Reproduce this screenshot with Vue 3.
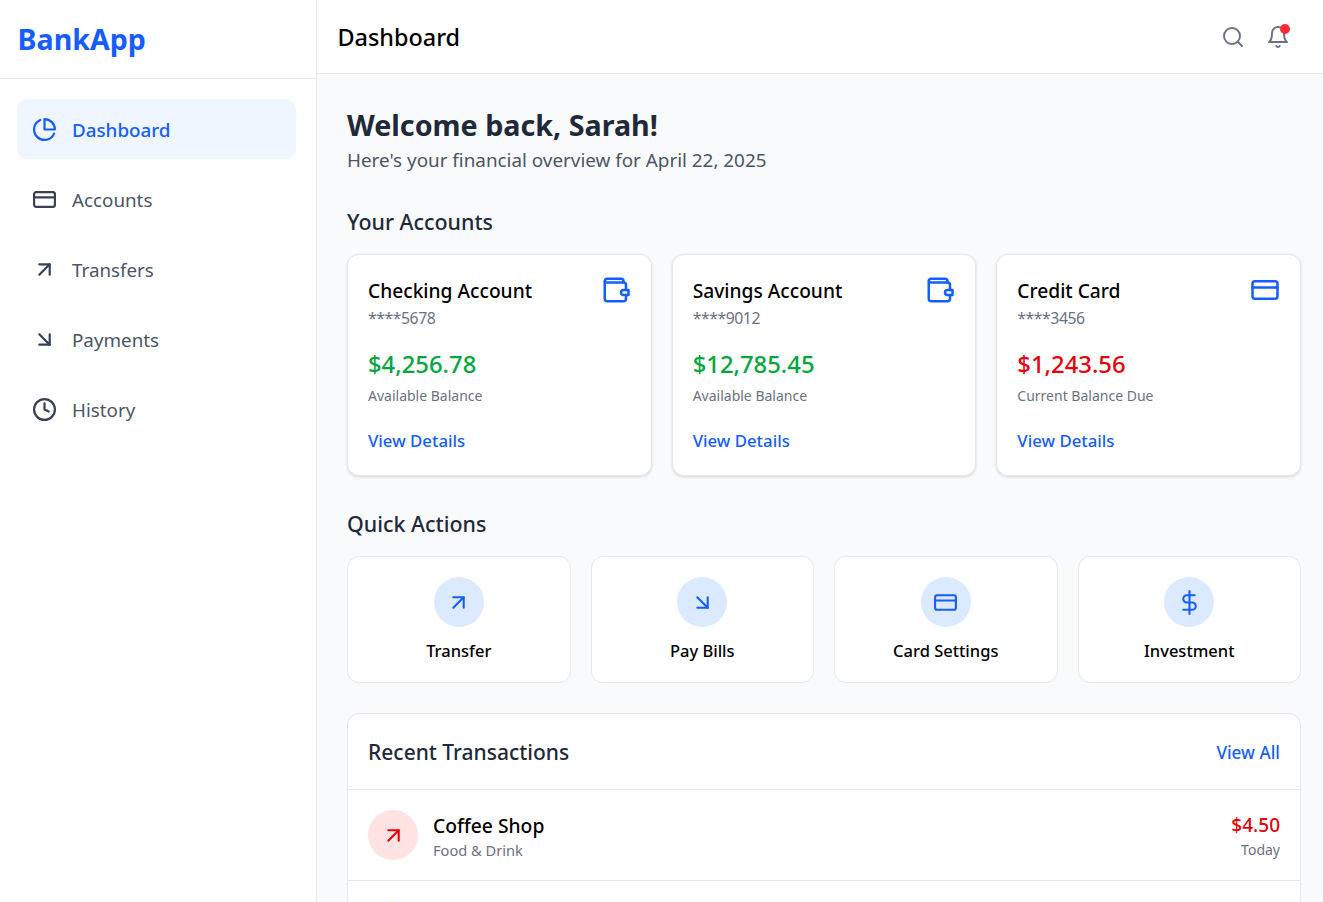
<script setup>
const nav = [
  { label: 'Dashboard', icon: 'pie', active: true },
  { label: 'Accounts', icon: 'card' },
  { label: 'Transfers', icon: 'up' },
  { label: 'Payments', icon: 'down' },
  { label: 'History', icon: 'clock' },
]
const accounts = [
  { name: 'Checking Account', num: '****5678', bal: '$4,256.78', note: 'Available Balance', icon: 'wallet', neg: false },
  { name: 'Savings Account', num: '****9012', bal: '$12,785.45', note: 'Available Balance', icon: 'wallet', neg: false },
  { name: 'Credit Card', num: '****3456', bal: '$1,243.56', note: 'Current Balance Due', icon: 'card', neg: true },
]
const actions = [
  { label: 'Transfer', icon: 'up' },
  { label: 'Pay Bills', icon: 'down' },
  { label: 'Card Settings', icon: 'card' },
  { label: 'Investment', icon: 'dollar' },
]
const paths = {
  pie: ['M21.21 15.89A10 10 0 1 1 8 2.83', 'M22 12A10 10 0 0 0 12 2v10z'],
  card: ['M4 5h16a2 2 0 0 1 2 2v10a2 2 0 0 1-2 2H4a2 2 0 0 1-2-2V7a2 2 0 0 1 2-2z', 'M2 10h20'],
  up: ['M7 17L17 7', 'M7 7h10v10'],
  down: ['M7 7l10 10', 'M17 7v10H7'],
  clock: ['M12 2a10 10 0 1 0 0 20a10 10 0 0 0 0-20z', 'M12 6v6l4 2'],
  wallet: ['M18 6V5a2 2 0 0 0-2-2H5a2 2 0 0 0-2 2v14a2 2 0 0 0 2 2h13a2 2 0 0 0 2-2v-3', 'M3 5a2 2 0 0 0 2 1h13a2 2 0 0 1 2 2v4', 'M22 12h-4a2 2 0 0 0 0 4h4z'],
  dollar: ['M12 1v22', 'M17 5H9.5a3.5 3.5 0 0 0 0 7h5a3.5 3.5 0 0 1 0 7H6'],
  search: ['M11 3a8 8 0 1 0 0 16a8 8 0 0 0 0-16z', 'M21 21l-4.35-4.35'],
  bell: ['M18 8A6 6 0 0 0 6 8c0 7-3 9-3 9h18s-3-2-3-9', 'M13.73 21a2 2 0 0 1-3.46 0'],
}
</script>

<template>
  <div class="app">
    <aside class="sidebar">
      <div class="brand">BankApp</div>
      <nav class="nav">
        <a v-for="n in nav" :key="n.label" class="nav-item" :class="{ active: n.active }">
          <svg class="nav-icon" viewBox="0 0 24 24"><path v-for="d in paths[n.icon]" :key="d" :d="d" /></svg>
          <span class="nav-label">{{ n.label }}</span>
        </a>
      </nav>
    </aside>
    <div class="main">
      <header class="topbar">
        <h1>Dashboard</h1>
        <div class="top-icons">
          <svg class="top-icon" viewBox="0 0 24 24"><path v-for="d in paths.search" :key="d" :d="d" /></svg>
          <span class="bell">
            <svg class="top-icon" viewBox="0 0 24 24"><path v-for="d in paths.bell" :key="d" :d="d" /></svg>
            <i class="dot"></i>
          </span>
        </div>
      </header>
      <main class="content">
        <h2 class="welcome">Welcome back, Sarah!</h2>
        <p class="sub">Here's your financial overview for April 22, 2025</p>
        <h3 class="section">Your Accounts</h3>
        <div class="accounts">
          <div v-for="a in accounts" :key="a.name" class="account">
            <div class="acc-head">
              <div>
                <div class="acc-name">{{ a.name }}</div>
                <div class="acc-num">{{ a.num }}</div>
              </div>
              <svg class="acc-icon" viewBox="0 0 24 24"><path v-for="d in paths[a.icon]" :key="d" :d="d" /></svg>
            </div>
            <div class="acc-bal" :class="a.neg ? 'neg' : 'pos'">{{ a.bal }}</div>
            <div class="acc-note">{{ a.note }}</div>
            <a class="link acc-link">View Details</a>
          </div>
        </div>
        <h3 class="section">Quick Actions</h3>
        <div class="actions">
          <div v-for="q in actions" :key="q.label" class="action">
            <span class="circle">
              <svg class="circle-icon" viewBox="0 0 24 24"><path v-for="d in paths[q.icon]" :key="d" :d="d" /></svg>
            </span>
            <span class="action-label">{{ q.label }}</span>
          </div>
        </div>
        <section class="tx">
          <div class="tx-head">
            <h3>Recent Transactions</h3>
            <a class="link all">View All</a>
          </div>
          <div class="tx-row">
            <span class="circle red">
              <svg class="circle-icon" viewBox="0 0 24 24"><path v-for="d in paths.up" :key="d" :d="d" /></svg>
            </span>
            <div class="tx-info">
              <div class="tx-name">Coffee Shop</div>
              <div class="tx-cat">Food &amp; Drink</div>
            </div>
            <div class="tx-right">
              <div class="tx-amt">$4.50</div>
              <div class="tx-cat today">Today</div>
            </div>
          </div>
          <div class="tx-row">
            <span class="circle green"></span>
          </div>
        </section>
      </main>
    </div>
  </div>
</template>

<style>
html, body { margin: 0; height: 100%; overflow: hidden; }
</style>

<style scoped>
.app {
  display: flex;
  height: 902px;
  overflow: hidden;
  font-family: "Noto Sans", sans-serif;
  background: #f9fafb;
  color: #101828;
}
svg { fill: none; stroke: currentColor; stroke-width: 2; stroke-linecap: round; stroke-linejoin: round; flex: none; }
.sidebar { width: 317px; box-sizing: border-box; flex: none; background: #fff; border-right: 1px solid #e5e7eb; }
.brand { height: 79px; box-sizing: border-box; border-bottom: 1px solid #e5e7eb; padding: 0 18px 2px 17.5px; display: flex; align-items: center; font-size: 28.6px; font-weight: 700; color: #155dfc; }
.nav { padding: 20px 17px; display: flex; flex-direction: column; gap: 10px; width: 279px; }
.nav-item { height: 60px; border-radius: 10px; display: flex; align-items: center; gap: 15px; padding: 0 15px; font-size: 18.8px; color: #4a5565; }
.nav-label { margin-top: 2px; }
.nav-item.active { background: #eff6ff; color: #155dfc; font-weight: 500; }
.nav-icon { width: 25px; height: 25px; stroke-width: 2.1; color: #364153; }
.active .nav-icon { color: #155dfc; }
.main { flex: 1; min-width: 0; display: flex; flex-direction: column; }
.topbar { height: 74px; box-sizing: border-box; flex: none; background: #fff; border-bottom: 1px solid #e5e7eb; display: flex; align-items: center; justify-content: space-between; padding: 0 33px 0 20.5px; }
.topbar h1 { margin: 0; font-size: 23.4px; font-weight: 500; color: #000; }
.top-icons { display: flex; gap: 21px; color: #6a7282; }
.top-icon { width: 24px; height: 24px; display: block; }
.bell { position: relative; display: block; }
.dot { position: absolute; top: -1px; right: 0; width: 10px; height: 10px; border-radius: 50%; background: #fb2c36; }
.content { padding: 31px 22px 0 30px; }
.welcome { margin: 0 0 1px; font-size: 28.7px; line-height: 40px; font-weight: 700; color: #1e2939; }
.sub { margin: 0; font-size: 18.85px; line-height: 28px; color: #4a5565; }
.section { margin: 33px 0 17px; font-size: 21.4px; line-height: 30px; font-weight: 500; color: #1e2939; }
.accounts { display: grid; grid-template-columns: repeat(3, 1fr); gap: 20px; }
.account { background: #fff; border: 1px solid #e5e7eb; border-radius: 12px; padding: 20px; box-shadow: 0 1px 3px rgba(0,0,0,.14); height: 222px; box-sizing: border-box; }
.acc-head { display: flex; justify-content: space-between; align-items: flex-start; }
.acc-name { font-size: 19.2px; line-height: 30px; font-weight: 500; color: #000; margin-top: 1px; }
.acc-num { font-size: 15.8px; line-height: 25px; letter-spacing: -0.45px; color: #6a7282; }
.acc-icon { width: 30px; height: 30px; color: #155dfc; }
.acc-bal { font-size: 23.8px; line-height: 34px; font-weight: 500; margin-top: 16px; }
.pos { color: #00a63e; }
.neg { color: #e7000b; }
.acc-note { font-size: 14px; line-height: 22px; color: #6a7282; margin-top: 4px; }
.link { color: #155dfc; font-size: 16.8px; font-weight: 500; }
.all { font-size: 17.2px; margin-top: 2px; }
.acc-link { display: block; margin-top: 21px; line-height: 26px; }
.actions { display: grid; grid-template-columns: repeat(4, 1fr); gap: 20px; }
.action { background: #fff; border: 1px solid #e5e7eb; border-radius: 12px; padding: 20px 0; display: flex; flex-direction: column; align-items: center; height: 127px; box-sizing: border-box; }
.circle { width: 50px; height: 50px; border-radius: 50%; background: #dbeafe; color: #155dfc; display: flex; align-items: center; justify-content: center; flex: none; }
.circle-icon { width: 25px; height: 25px; }
.action-label { margin-top: 11px; font-size: 16.5px; line-height: 26px; font-weight: 500; color: #000; }
.tx { margin-top: 30px; background: #fff; border: 1px solid #e5e7eb; border-radius: 12px; }
.tx-head { height: 76px; box-sizing: border-box; display: flex; align-items: center; justify-content: space-between; padding: 0 20px; border-bottom: 1px solid #e5e7eb; }
.tx-head h3 { margin: 0; font-size: 21px; font-weight: 500; color: #1e2939; }
.tx-row { height: 91px; box-sizing: border-box; display: flex; align-items: center; gap: 15px; padding: 0 20px; border-bottom: 1px solid #e5e7eb; }
.red { background: #ffe2e2; color: #e7000b; }
.green { background: #dcfce7; }
.tx-info { flex: 1; }
.tx-name { font-size: 19.3px; line-height: 28px; font-weight: 500; color: #000; margin-top: 2px; }
.tx-cat { font-size: 14.6px; line-height: 22px; color: #6a7282; margin-top: -1px; }
.today { font-size: 14px; margin-top: 1px; }
.tx-right { text-align: right; }
.tx-amt { font-size: 19px; line-height: 26px; font-weight: 500; color: #e7000b; margin-top: 3px; }
</style>
